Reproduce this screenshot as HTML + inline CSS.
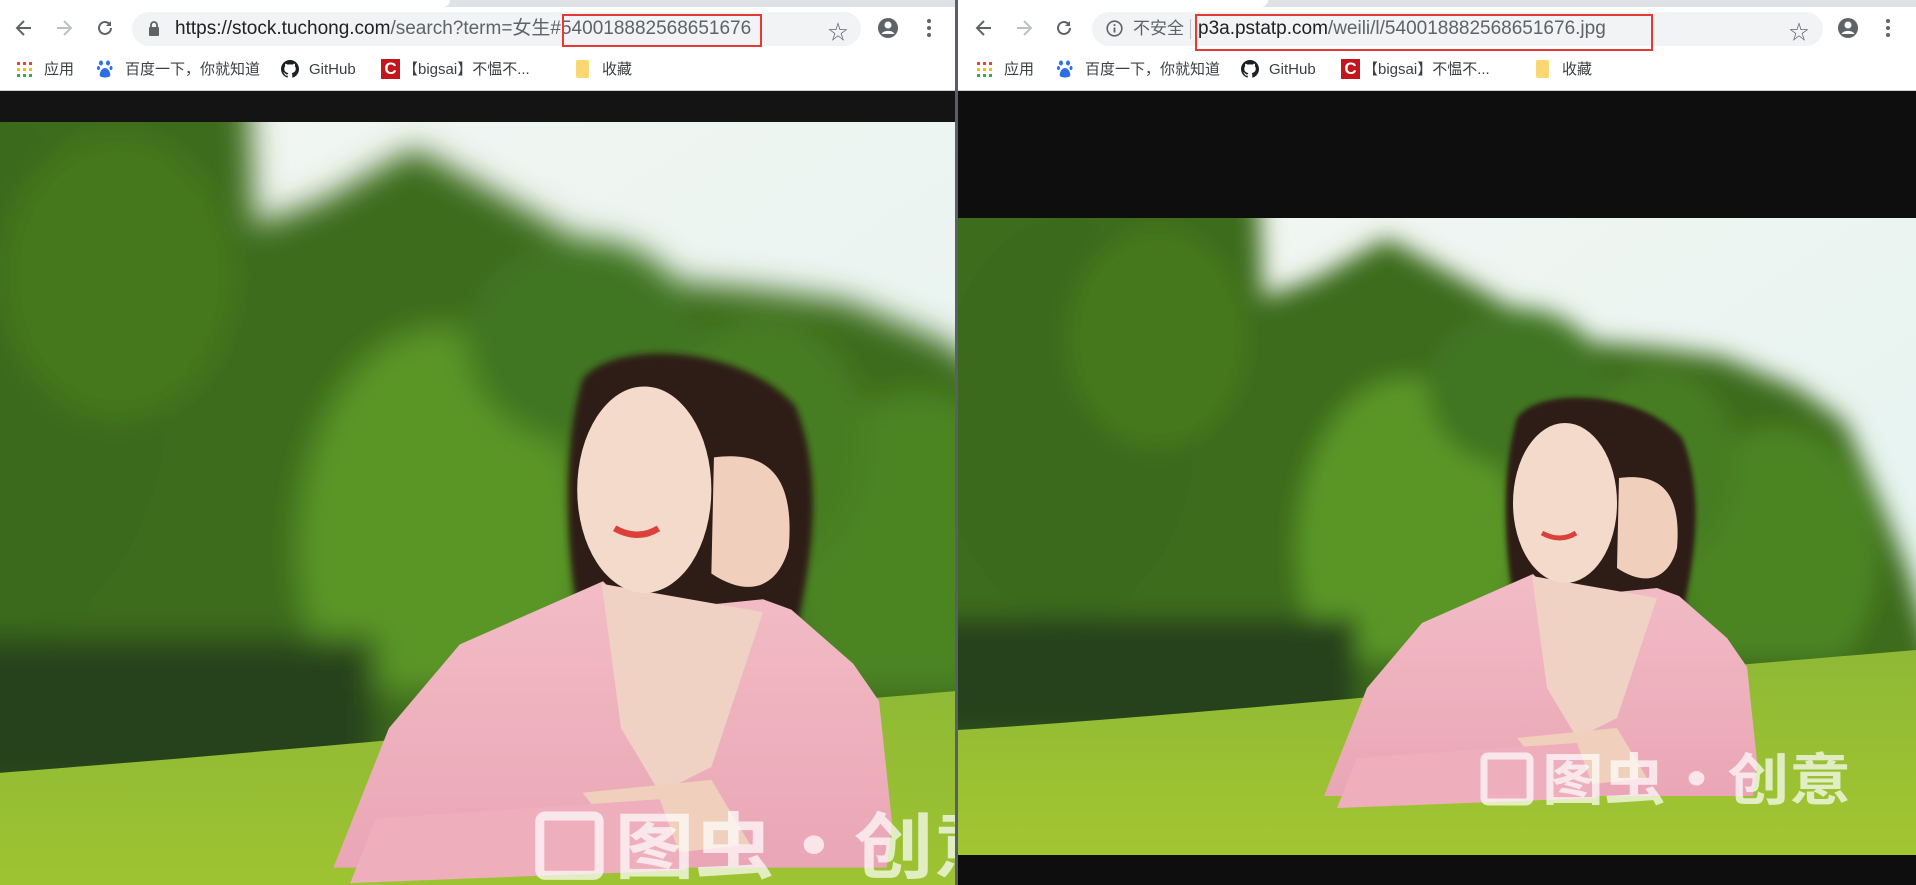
<!DOCTYPE html>
<html><head><meta charset="utf-8"><style>
*{margin:0;padding:0;box-sizing:border-box}
html,body{width:1916px;height:885px;overflow:hidden}
body{background:#fff;position:relative;font-family:"Liberation Sans","Noto Sans CJK SC",sans-serif}
.abs{position:absolute}
.tabs{top:0;height:7px;background:#dee1e6}
.tb{top:7px;height:46px;background:#fff}
.pill{top:12px;height:34px;background:#f1f3f4;border-radius:17px}
.url{top:15px;font-size:19px;line-height:28px;color:#5f6368;white-space:nowrap}
.url b{font-weight:normal;color:#202124}
.red{border:2px solid #e53935}
.bm{top:60px;font-size:15px;color:#3c4043;line-height:20px;white-space:nowrap}
.ic{position:absolute}
</style></head><body>
<svg width="0" height="0" style="position:absolute">
<defs>
<filter id="b8" filterUnits="userSpaceOnUse" x="-200" y="-200" width="1400" height="1000"><feGaussianBlur stdDeviation="12"/></filter>
<filter id="b3" filterUnits="userSpaceOnUse" x="-200" y="-200" width="1400" height="1000"><feGaussianBlur stdDeviation="2.5"/></filter>
<linearGradient id="sky" x1="0" y1="0" x2="1" y2="1"><stop offset="0" stop-color="#f4f6f2"/><stop offset="1" stop-color="#e2f3f0"/></linearGradient>
<linearGradient id="grass" x1="0" y1="0" x2="0" y2="1"><stop offset="0" stop-color="#8fb935"/><stop offset="1" stop-color="#a2c631"/></linearGradient>
<linearGradient id="pink" x1="0" y1="0" x2="0" y2="1"><stop offset="0" stop-color="#f2bcc6"/><stop offset="1" stop-color="#eaa6b6"/></linearGradient>
<g id="scene">
<rect width="959" height="637" fill="url(#sky)"/>
<g filter="url(#b8)">
<path d="M-60,-60 L300,-60 L306,80 L360,60 L430,20 L520,70 L612,122 L700,130 L765,139 L840,170 L888,204 L930,300 L950,350 L990,480 L990,560 L-60,560 Z" fill="#3d6c1d"/>
<ellipse cx="110" cy="200" rx="130" ry="200" fill="#3a6a1c"/>
<ellipse cx="200" cy="120" rx="90" ry="110" fill="#44781f"/>
<ellipse cx="450" cy="330" rx="110" ry="170" fill="#5a9626"/>
<ellipse cx="820" cy="340" rx="100" ry="130" fill="#4c8522"/>
<ellipse cx="560" cy="170" rx="90" ry="80" fill="#3f7421"/>
<ellipse cx="700" cy="250" rx="80" ry="100" fill="#467d20"/>
<rect x="-60" y="400" width="460" height="120" fill="#27421a"/>
<rect x="400" y="440" width="560" height="60" fill="#3d6a1c"/>
</g>
<path d="M0,512 C200,500 500,470 959,432 L959,637 L0,637Z" fill="url(#grass)"/>
<g filter="url(#b3)">
<path d="M560,200 C580,170 680,170 725,220 C750,280 735,350 725,400 L560,400 C545,330 545,250 560,200Z" fill="#2e1d17"/>
</g>
<path d="M367,578 L410,470 L465,405 L576,356 L600,380 L700,370 L722,378 L770,420 L790,449 L800,543 L796,578 Z" fill="url(#pink)"/>
<path d="M575,358 L590,470 L620,520 L660,500 L700,380Z" fill="#f0d2c4"/>
<ellipse cx="608" cy="285" rx="52" ry="80" fill="#f4dacb"/>
<path d="M662,260 C700,255 725,270 720,330 C712,360 690,370 660,350Z" fill="#f0cfbd"/>
<path d="M585,315 q18,10 34,0" stroke="#d9413a" stroke-width="5" fill="none"/>
<path d="M560,520 L660,510 L690,560 L600,570Z" fill="#f0cfbd"/>
<path d="M400,540 L620,525 L640,580 L380,590Z" fill="#eeaebb"/>
<rect x="527" y="538" width="46" height="46" rx="4" fill="none" stroke="#fff" stroke-opacity="0.7" stroke-width="7"/>
<text x="585" y="582" font-size="56" fill="#fff" fill-opacity="0.7" font-family="Noto Sans CJK SC,sans-serif" font-weight="bold" textLength="309" lengthAdjust="spacingAndGlyphs">图虫·创意</text>
</g>
</defs></svg>

<!-- LEFT WINDOW -->
<div class="abs tabs" style="left:0;width:955px"></div>
<div class="abs" style="left:0;top:0;width:450px;height:7px;background:#fff;border-radius:0 0 8px 0"></div>
<div class="abs tb" style="left:0;width:955px"></div>
<div class="abs" style="left:0;top:53px;width:955px;height:38px;background:#fff;border-bottom:1px solid #d0d0d0"></div>
<div class="abs pill" style="left:132px;width:729px"></div>
<svg class="ic" style="left:14px;top:18px" width="20" height="20" viewBox="0 0 20 20"><path d="M17,10H4M10,3L3,10l7,7" stroke="#5f6368" stroke-width="2" fill="none"/></svg>
<svg class="ic" style="left:54px;top:18px" width="20" height="20" viewBox="0 0 20 20"><path d="M3,10H16M10,3l7,7-7,7" stroke="#bdc1c6" stroke-width="2" fill="none"/></svg>
<svg class="ic" style="left:95px;top:18px" width="20" height="20" viewBox="0 0 20 20"><path d="M16,10a6,6 0 1 1-2-4.5" stroke="#5f6368" stroke-width="2" fill="none"/><path d="M16,3v5h-5z" fill="#5f6368"/></svg>
<svg class="ic" style="left:148px;top:21px" width="12" height="15" viewBox="0 0 12 15"><rect x="1" y="6" width="10" height="9" rx="1" fill="#5f6368"/><path d="M3,6V4a3,3 0 0 1 6,0v2" stroke="#5f6368" stroke-width="1.8" fill="none"/></svg>
<div class="abs url" style="left:175px"><b>https://stock.tuchong.com</b>/search?term=女生#540018882568651676</div>
<div class="abs red" style="left:562px;top:14px;width:200px;height:33px"></div>
<div class="abs" style="left:828px;top:16px;font-size:20px;color:#5f6368">☆</div>
<svg class="ic" style="left:877px;top:17px" width="22" height="22" viewBox="0 0 22 22"><circle cx="11" cy="11" r="10" fill="#5f6368"/><circle cx="11" cy="8" r="3.5" fill="#fff"/><path d="M4.5,17a7,5 0 0 1 13,0" fill="#fff"/></svg>
<svg class="ic" style="left:926px;top:18px" width="6" height="20"><circle cx="3" cy="3" r="2" fill="#5f6368"/><circle cx="3" cy="10" r="2" fill="#5f6368"/><circle cx="3" cy="17" r="2" fill="#5f6368"/></svg>

<svg class="ic" style="left:17px;top:62px" width="15" height="15"><g fill="#ea4335"><rect x="0" y="0" width="3" height="3"/><rect x="6" y="0" width="3" height="3"/><rect x="12" y="0" width="3" height="3"/></g><g fill="#fbbc04"><rect x="0" y="6" width="3" height="3"/><rect x="6" y="6" width="3" height="3"/><rect x="12" y="6" width="3" height="3"/></g><g fill="#34a853"><rect x="0" y="12" width="3" height="3"/><rect x="6" y="12" width="3" height="3"/><rect x="12" y="12" width="3" height="3"/></g></svg>
<div class="abs bm" style="left:44px">应用</div>
<svg class="ic" style="left:97px;top:60px" width="16" height="18" viewBox="0 0 16 18"><g fill="#2f6fe4"><ellipse cx="4" cy="3" rx="2" ry="2.5"/><ellipse cx="11" cy="3" rx="2" ry="2.5"/><ellipse cx="1.5" cy="8" rx="1.5" ry="2"/><ellipse cx="14" cy="8" rx="1.5" ry="2"/><path d="M8,8c-4,0-6,6-5,8s9,2 10,0-1-8-5-8z"/></g></svg>
<div class="abs bm" style="left:125px">百度一下，你就知道</div>
<svg class="ic" style="left:281px;top:60px" width="18" height="18" viewBox="0 0 16 16"><path fill="#1b1f23" d="M8 0C3.58 0 0 3.58 0 8c0 3.54 2.29 6.53 5.47 7.59.4.07.55-.17.55-.38v-1.34c-2.23.48-2.7-1.07-2.7-1.07-.36-.92-.89-1.17-.89-1.17-.73-.5.06-.49.06-.49.8.06 1.23.83 1.23.83.71 1.22 1.87.87 2.33.66.07-.52.28-.87.51-1.07-1.78-.2-3.64-.89-3.64-3.95 0-.87.31-1.59.82-2.15-.08-.2-.36-1.02.08-2.12 0 0 .67-.21 2.2.82a7.6 7.6 0 0 1 4 0c1.53-1.04 2.2-.82 2.2-.82.44 1.1.16 1.92.08 2.12.51.56.82 1.27.82 2.15 0 3.07-1.87 3.75-3.65 3.950.29.25.54.73.54 1.48v2.2c0 .21.15.46.55.38A8 8 0 0 0 16 8c0-4.42-3.58-8-8-8z"/></svg>
<div class="abs bm" style="left:309px">GitHub</div>
<div class="abs" style="left:381px;top:59px;width:19px;height:20px;background:#c4151c;color:#fff;font-weight:bold;font-size:17px;line-height:20px;text-align:center">C</div>
<div class="abs bm" style="left:403px">【bigsai】不愠不...</div>
<div class="abs" style="left:576px;top:60px;width:13px;height:18px;background:#fbd774;border-radius:2px"></div>
<div class="abs bm" style="left:602px">收藏</div>

<div class="abs" style="left:0;top:91px;width:955px;height:794px;background:#141414;overflow:hidden">
<svg class="abs" style="left:-140px;top:31px" width="1237" height="763" viewBox="0 0 959 591.5" preserveAspectRatio="xMinYMin slice"><use href="#scene"/></svg>
</div>
<div class="abs" style="left:955px;top:0;width:3px;height:885px;background:#5a5f66"></div>

<!-- RIGHT WINDOW -->
<div class="abs tabs" style="left:958px;width:958px"></div>
<div class="abs" style="left:958px;top:0;width:310px;height:7px;background:#fff;border-radius:0 0 8px 0"></div>
<div class="abs tb" style="left:958px;width:958px"></div>
<div class="abs" style="left:958px;top:53px;width:958px;height:38px;background:#fff;border-bottom:1px solid #d0d0d0"></div>
<div class="abs pill" style="left:1092px;width:731px"></div>
<svg class="ic" style="left:974px;top:18px" width="20" height="20" viewBox="0 0 20 20"><path d="M17,10H4M10,3L3,10l7,7" stroke="#5f6368" stroke-width="2" fill="none"/></svg>
<svg class="ic" style="left:1014px;top:18px" width="20" height="20" viewBox="0 0 20 20"><path d="M3,10H16M10,3l7,7-7,7" stroke="#bdc1c6" stroke-width="2" fill="none"/></svg>
<svg class="ic" style="left:1054px;top:18px" width="20" height="20" viewBox="0 0 20 20"><path d="M16,10a6,6 0 1 1-2-4.5" stroke="#5f6368" stroke-width="2" fill="none"/><path d="M16,3v5h-5z" fill="#5f6368"/></svg>
<svg class="ic" style="left:1106px;top:20px" width="17" height="17" viewBox="0 0 17 17"><circle cx="8.5" cy="8.5" r="7.3" stroke="#5f6368" stroke-width="1.6" fill="none"/><rect x="7.6" y="7.5" width="1.8" height="5" fill="#5f6368"/><rect x="7.6" y="4.2" width="1.8" height="1.8" fill="#5f6368"/></svg>
<div class="abs url" style="left:1133px;font-size:17px;color:#5f6368">不安全</div>
<div class="abs" style="left:1190px;top:19px;width:1px;height:20px;background:#c0c0c0"></div>
<div class="abs url" style="left:1198px"><b>p3a.pstatp.com</b>/weili/l/540018882568651676.jpg</div>
<div class="abs red" style="left:1195px;top:14px;width:458px;height:37px"></div>
<div class="abs" style="left:1789px;top:16px;font-size:20px;color:#5f6368">☆</div>
<svg class="ic" style="left:1837px;top:17px" width="22" height="22" viewBox="0 0 22 22"><circle cx="11" cy="11" r="10" fill="#5f6368"/><circle cx="11" cy="8" r="3.5" fill="#fff"/><path d="M4.5,17a7,5 0 0 1 13,0" fill="#fff"/></svg>
<svg class="ic" style="left:1885px;top:18px" width="6" height="20"><circle cx="3" cy="3" r="2" fill="#5f6368"/><circle cx="3" cy="10" r="2" fill="#5f6368"/><circle cx="3" cy="17" r="2" fill="#5f6368"/></svg>

<svg class="ic" style="left:977px;top:62px" width="15" height="15"><g fill="#ea4335"><rect x="0" y="0" width="3" height="3"/><rect x="6" y="0" width="3" height="3"/><rect x="12" y="0" width="3" height="3"/></g><g fill="#fbbc04"><rect x="0" y="6" width="3" height="3"/><rect x="6" y="6" width="3" height="3"/><rect x="12" y="6" width="3" height="3"/></g><g fill="#34a853"><rect x="0" y="12" width="3" height="3"/><rect x="6" y="12" width="3" height="3"/><rect x="12" y="12" width="3" height="3"/></g></svg>
<div class="abs bm" style="left:1004px">应用</div>
<svg class="ic" style="left:1057px;top:60px" width="16" height="18" viewBox="0 0 16 18"><g fill="#2f6fe4"><ellipse cx="4" cy="3" rx="2" ry="2.5"/><ellipse cx="11" cy="3" rx="2" ry="2.5"/><ellipse cx="1.5" cy="8" rx="1.5" ry="2"/><ellipse cx="14" cy="8" rx="1.5" ry="2"/><path d="M8,8c-4,0-6,6-5,8s9,2 10,0-1-8-5-8z"/></g></svg>
<div class="abs bm" style="left:1085px">百度一下，你就知道</div>
<svg class="ic" style="left:1241px;top:60px" width="18" height="18" viewBox="0 0 16 16"><path fill="#1b1f23" d="M8 0C3.58 0 0 3.58 0 8c0 3.54 2.29 6.53 5.47 7.59.4.07.55-.17.55-.38v-1.34c-2.23.48-2.7-1.07-2.7-1.07-.36-.92-.89-1.17-.89-1.17-.73-.5.06-.49.06-.49.8.06 1.23.83 1.23.83.71 1.22 1.87.87 2.33.66.07-.52.28-.87.51-1.07-1.78-.2-3.64-.89-3.64-3.95 0-.87.31-1.59.82-2.15-.08-.2-.36-1.02.08-2.12 0 0 .67-.21 2.2.82a7.6 7.6 0 0 1 4 0c1.53-1.04 2.2-.82 2.2-.82.44 1.1.16 1.92.08 2.12.51.56.82 1.27.82 2.15 0 3.07-1.87 3.75-3.65 3.95.29.25.54.73.54 1.48v2.2c0 .21.15.46.55.38A8 8 0 0 0 16 8c0-4.42-3.58-8-8-8z"/></svg>
<div class="abs bm" style="left:1269px">GitHub</div>
<div class="abs" style="left:1341px;top:59px;width:19px;height:20px;background:#c4151c;color:#fff;font-weight:bold;font-size:17px;line-height:20px;text-align:center">C</div>
<div class="abs bm" style="left:1363px">【bigsai】不愠不...</div>
<div class="abs" style="left:1536px;top:60px;width:13px;height:18px;background:#fbd774;border-radius:2px"></div>
<div class="abs bm" style="left:1562px">收藏</div>

<div class="abs" style="left:958px;top:91px;width:958px;height:794px;background:#0e0e0e;overflow:hidden">
<svg class="abs" style="left:-1px;top:127px" width="959" height="637" viewBox="0 0 959 637"><use href="#scene"/></svg>
</div>
</body></html>
